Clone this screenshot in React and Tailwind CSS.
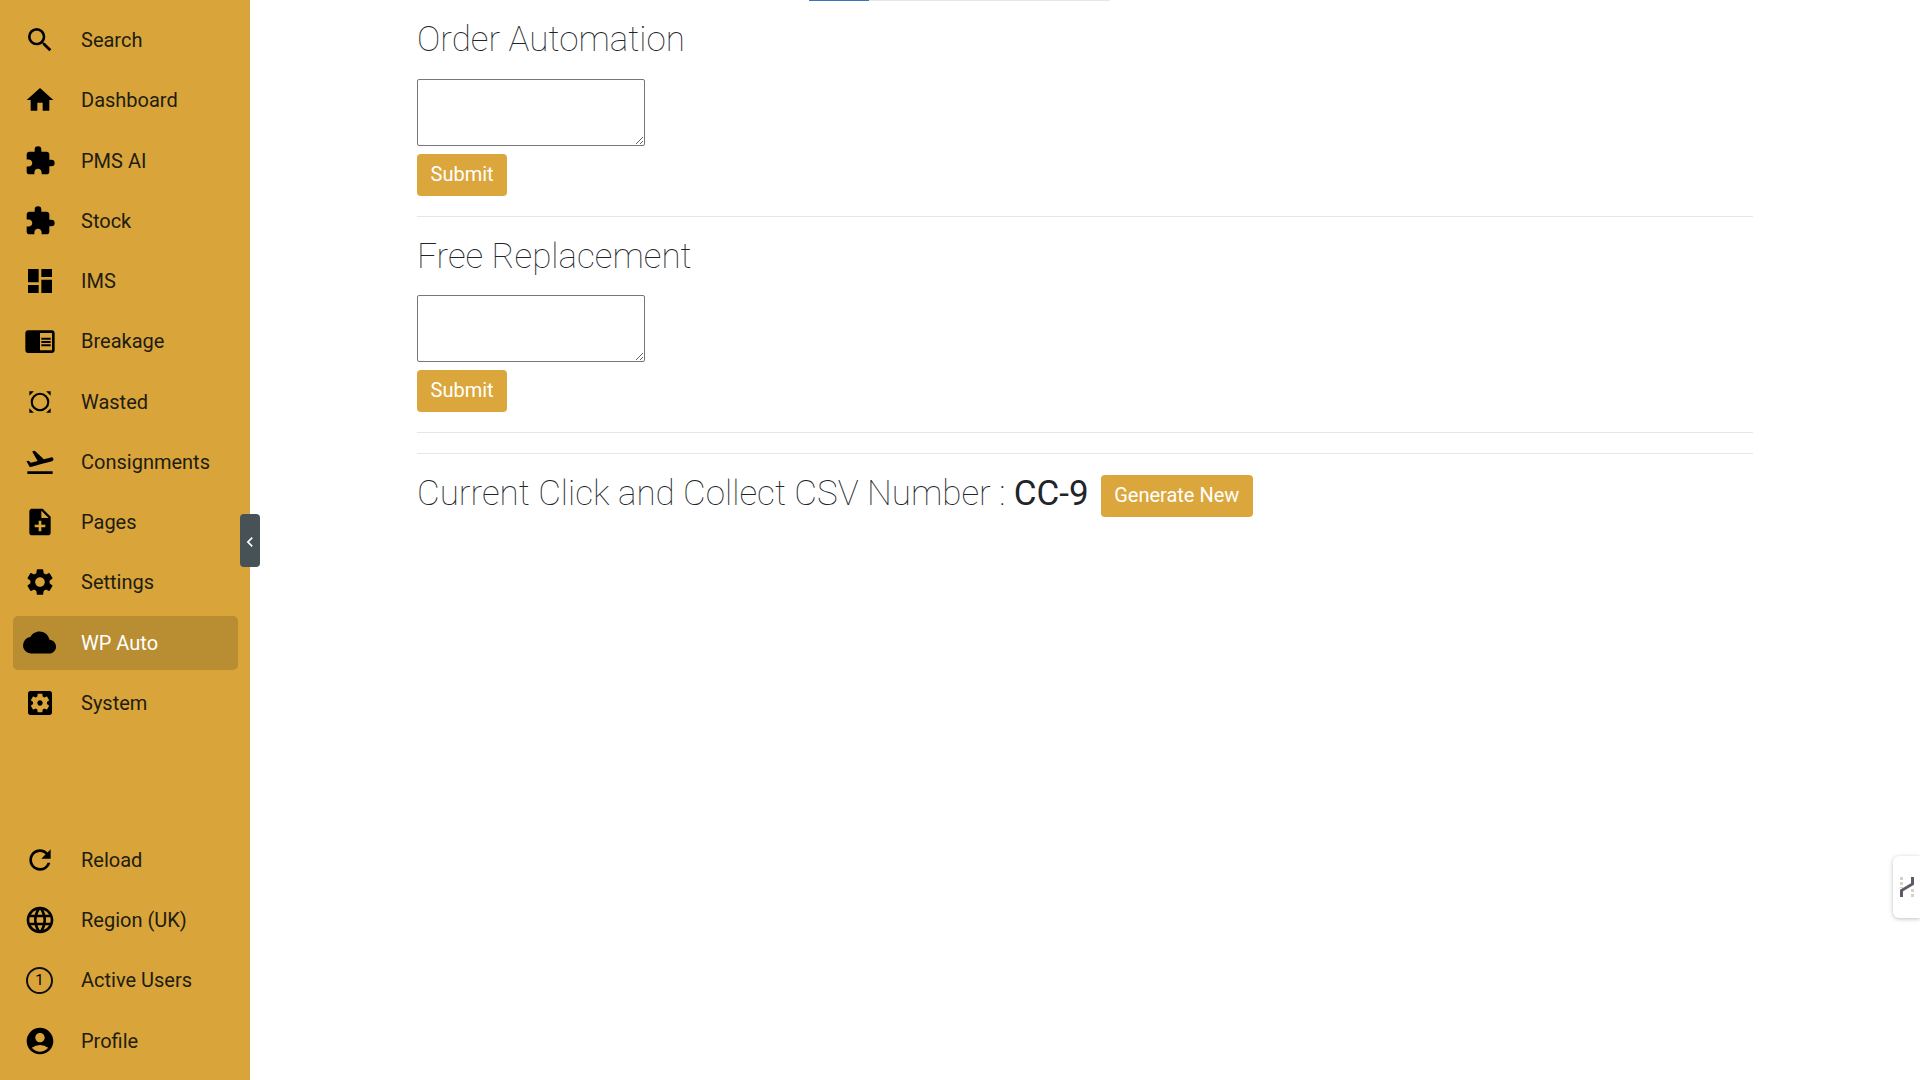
import React from "react";
import {
  MdSearch,
  MdHome,
  MdExtension,
  MdDashboard,
  MdChromeReaderMode,
  MdFlightTakeoff,
  MdNoteAdd,
  MdSettings,
  MdCloud,
  MdSettingsApplications,
  MdRefresh,
  MdLanguage,
  MdAccountCircle,
  MdChevronLeft,
} from "react-icons/md";

function WastedIcon({ size }) {
  return (
    <svg width={size} height={size} viewBox="0 0 24 24" fill="currentColor">
      <path d="M12 5a7 7 0 1 0 0 14 7 7 0 0 0 0-14zm0 1.6a5.4 5.4 0 1 1 0 10.8 5.4 5.4 0 0 1 0-10.8z" />
      <path d="M4 4h3.4L4 7.4zM20 4v3.4L16.6 4zM4 20v-3.4L7.4 20zM20 20h-3.4l3.4-3.4z" />
    </svg>
  );
}

function ActiveUsersIcon() {
  return (
    <span className="flex h-[27px] w-[27px] items-center justify-center rounded-full border-[2.5px] border-[#111] text-[15px] leading-none">
      1
    </span>
  );
}

const topItems = [
  { label: "Search", icon: MdSearch },
  { label: "Dashboard", icon: MdHome },
  { label: "PMS AI", icon: MdExtension },
  { label: "Stock", icon: MdExtension },
  { label: "IMS", icon: MdDashboard },
  { label: "Breakage", icon: MdChromeReaderMode },
  { label: "Wasted", icon: WastedIcon },
  { label: "Consignments", icon: MdFlightTakeoff },
  { label: "Pages", icon: MdNoteAdd },
  { label: "Settings", icon: MdSettings },
  { label: "WP Auto", icon: MdCloud, active: true },
  { label: "System", icon: MdSettingsApplications },
];

const bottomItems = [
  { label: "Reload", icon: MdRefresh },
  { label: "Region (UK)", icon: MdLanguage },
  { label: "Active Users", icon: ActiveUsersIcon },
  { label: "Profile", icon: MdAccountCircle },
];

function NavItem({ item }) {
  const Icon = item.icon;
  return (
    <div
      className={
        item.active
          ? "mr-[12px] ml-[13px] flex h-[54px] items-center rounded-[5px] bg-[#b98d32] text-white"
          : "mr-[12px] ml-[13px] flex h-[54px] items-center rounded-[5px] text-[#211c10]"
      }
    >
      <span className="flex w-[53px] shrink-0 items-center justify-center text-black">
        <Icon size={item.active ? 33 : 32} />
      </span>
      <span className="ml-[15px] text-[20px]">{item.label}</span>
    </div>
  );
}

function GoldButton({ children }) {
  return (
    <button className="h-[42px] rounded-[4px] bg-[#dba63b] px-[13.5px] pb-[2px] text-[20px] text-white">
      {children}
    </button>
  );
}

function TextSection({ title, first }) {
  return (
    <section>
      <h2
        className={
          first
            ? "mt-[18px] mb-[18px] h-[43px] text-[35px] leading-[43px] font-thin text-[#212529]"
            : "mt-[18px] mb-[17px] h-[43px] text-[35px] leading-[43px] font-thin text-[#212529]"
        }
      >
        {title}
      </h2>
      <textarea className="block h-[67px] w-[228px] rounded-[2px] border border-[#767676] bg-white"></textarea>
      <div className="mt-[8px] flex">
        <GoldButton>Submit</GoldButton>
      </div>
      <hr className="mt-[20px] border-t border-[#e5e7e9]" />
    </section>
  );
}

export default function App() {
  return (
    <div className="flex h-screen overflow-hidden bg-white font-['Roboto',sans-serif]">
      <aside className="relative flex h-full w-[250px] shrink-0 flex-col justify-between bg-[#d9a53b] pt-[13px] pb-[12.5px]">
        <nav className="flex flex-col gap-[6.26px]">
          {topItems.map((item) => (
            <NavItem key={item.label} item={item} />
          ))}
        </nav>
        <nav className="flex flex-col gap-[6.2px]">
          {bottomItems.map((item) => (
            <NavItem key={item.label} item={item} />
          ))}
        </nav>
        <button className="absolute top-[514px] left-[240px] flex h-[53px] w-[20px] items-center justify-center rounded-[4px] bg-[#465256] pt-[2px] text-white">
          <MdChevronLeft size={22} />
        </button>
      </aside>

      <main className="relative flex-1 pl-[167px]">
        <div className="absolute top-0 left-[559px] flex h-[1px] w-[301px] bg-[#e5e7e9]">
          <div className="h-full w-[60px] bg-[#3b73b9]"></div>
        </div>
        <div className="w-[1336px]">
          <TextSection title="Order Automation" first />
          <TextSection title="Free Replacement" />
          <hr className="mt-[20px] border-t border-[#e5e7e9]" />
          <div className="mt-[18px] flex items-center">
            <h2 className="pb-[4px] text-[35px] leading-[43px] font-thin whitespace-nowrap text-[#212529]">
              Current Click and Collect CSV Number : <span className="font-normal">CC-9</span>
            </h2>
            <div className="ml-[12px]">
              <GoldButton>Generate New</GoldButton>
            </div>
          </div>
        </div>
        <div className="absolute top-[856px] right-0 flex h-[62px] w-[27px] items-center justify-center rounded-l-[6px] bg-white shadow-[0_1px_4px_rgba(0,0,0,0.25)]">
          <svg width="18" height="24" viewBox="0 0 18 24" fill="none">
            <path d="M3.5 22V15.5L14.5 9V2" stroke="#5f5a66" strokeWidth="3" />
            <path d="M3.5 2V13M14.5 14V23" stroke="#d8cfc9" strokeWidth="3" strokeDasharray="3 2" />
          </svg>
        </div>
      </main>
    </div>
  );
}
